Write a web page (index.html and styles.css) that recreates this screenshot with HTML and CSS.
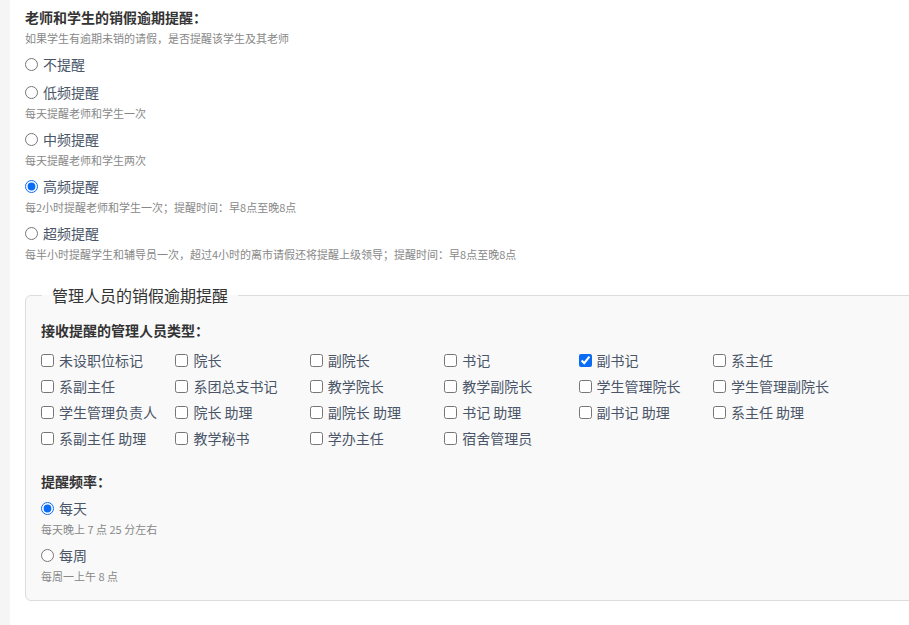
FILE: index.html
```html
<!DOCTYPE html>
<html lang="zh-CN">
<head>
    <meta charset="UTF-8">
    <meta name="viewport" content="width=device-width, initial-scale=1.0">
    <title>销假逾期提醒设置</title>
    <link rel="stylesheet" href="styles.css">
</head>
<body>
    <div class="page">
        <div class="section">
            <h3 class="section-title">老师和学生的销假逾期提醒：</h3>
            <p class="hint">如果学生有逾期未销的请假，是否提醒该学生及其老师</p>

            <div class="option">
                <label class="radio"><input type="radio" name="student"> 不提醒</label>
            </div>
            <div class="option">
                <label class="radio"><input type="radio" name="student"> 低频提醒</label>
                <p class="hint">每天提醒老师和学生一次</p>
            </div>
            <div class="option">
                <label class="radio"><input type="radio" name="student"> 中频提醒</label>
                <p class="hint">每天提醒老师和学生两次</p>
            </div>
            <div class="option">
                <label class="radio"><input type="radio" name="student" checked> 高频提醒</label>
                <p class="hint">每2小时提醒老师和学生一次；提醒时间：早8点至晚8点</p>
            </div>
            <div class="option">
                <label class="radio"><input type="radio" name="student"> 超频提醒</label>
                <p class="hint">每半小时提醒学生和辅导员一次，超过4小时的离市请假还将提醒上级领导；提醒时间：早8点至晚8点</p>
            </div>
        </div>

        <fieldset class="admin-box">
            <legend>管理人员的销假逾期提醒</legend>

            <h3 class="section-title">接收提醒的管理人员类型：</h3>
            <div class="role-grid">
                <label class="check"><input type="checkbox"> 未设职位标记</label>
                <label class="check"><input type="checkbox"> 院长</label>
                <label class="check"><input type="checkbox"> 副院长</label>
                <label class="check"><input type="checkbox"> 书记</label>
                <label class="check"><input type="checkbox" checked> 副书记</label>
                <label class="check"><input type="checkbox"> 系主任</label>
                <label class="check"><input type="checkbox"> 系副主任</label>
                <label class="check"><input type="checkbox"> 系团总支书记</label>
                <label class="check"><input type="checkbox"> 教学院长</label>
                <label class="check"><input type="checkbox"> 教学副院长</label>
                <label class="check"><input type="checkbox"> 学生管理院长</label>
                <label class="check"><input type="checkbox"> 学生管理副院长</label>
                <label class="check"><input type="checkbox"> 学生管理负责人</label>
                <label class="check"><input type="checkbox"> 院长 助理</label>
                <label class="check"><input type="checkbox"> 副院长 助理</label>
                <label class="check"><input type="checkbox"> 书记 助理</label>
                <label class="check"><input type="checkbox"> 副书记 助理</label>
                <label class="check"><input type="checkbox"> 系主任 助理</label>
                <label class="check"><input type="checkbox"> 系副主任 助理</label>
                <label class="check"><input type="checkbox"> 教学秘书</label>
                <label class="check"><input type="checkbox"> 学办主任</label>
                <label class="check"><input type="checkbox"> 宿舍管理员</label>
            </div>

            <h3 class="section-title freq-title">提醒频率：</h3>
            <div class="option">
                <label class="radio"><input type="radio" name="freq" checked> 每天</label>
                <p class="hint">每天晚上 7 点 25 分左右</p>
            </div>
            <div class="option last">
                <label class="radio"><input type="radio" name="freq"> 每周</label>
                <p class="hint">每周一上午 8 点</p>
            </div>
        </fieldset>
    </div>
</body>
</html>
```

FILE: styles.css
```css
* {
    margin: 0;
    padding: 0;
    box-sizing: border-box;
}

html, body {
    overflow: hidden;
}

body {
    font-family: "Noto Sans CJK SC", "Noto Sans", sans-serif;
    background: #f5f5f5;
    min-height: 100vh;
}

.page {
    margin-left: 10px;
    background: #fff;
    min-height: 100vh;
    padding: 7px 0 0 15px;
    overflow: hidden;
}

.section-title {
    font-size: 14px;
    line-height: 20px;
    font-weight: 700;
    color: #333;
}

.hint {
    font-size: 11px;
    line-height: 16px;
    color: #888;
    margin-top: 3px;
}

.section > .hint {
    margin-bottom: 8px;
}

.option {
    margin-bottom: 8px;
}

.option.last {
    margin-bottom: 0;
}

.radio,
.check {
    display: flex;
    align-items: center;
    gap: 5px;
    font-size: 14px;
    line-height: 20px;
    color: #4a5568;
    white-space: nowrap;
}

.radio input,
.check input {
    width: 13px;
    height: 13px;
    margin: 0;
    accent-color: #0a6cf5;
    flex-shrink: 0;
}

.admin-box {
    width: 960px;
    margin-top: 22px;
    border: 1px solid #dcdcdc;
    border-radius: 6px;
    background: #f9f9f9;
    padding: 14px 15px 16px;
}

.admin-box legend {
    font-size: 16px;
    line-height: 22px;
    color: #333;
    padding: 0 10px;
    margin-left: 1px;
}

.role-grid {
    display: grid;
    grid-template-columns: repeat(6, 134.4px);
    row-gap: 6px;
    margin-top: 10px;
}

.freq-title {
    margin-top: 23px;
    margin-bottom: 7px;
}
```
